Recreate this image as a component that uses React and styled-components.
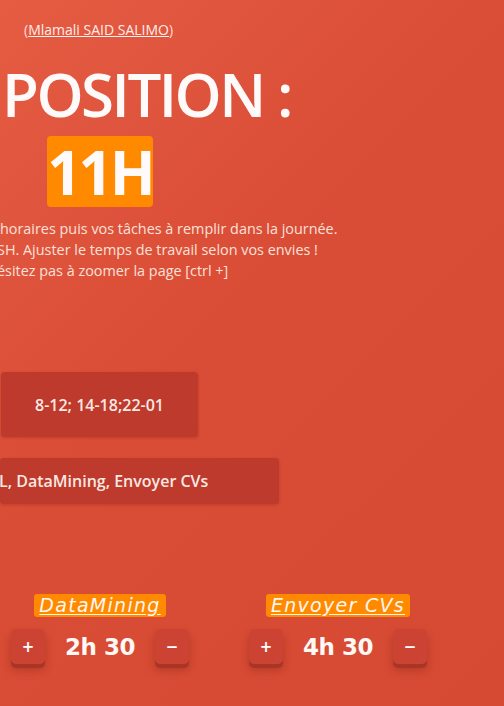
import React from "react";
import styled, { createGlobalStyle } from "styled-components";

const GlobalStyle = createGlobalStyle`
  html, body {
    margin: 0;
    padding: 0;
  }
  body {
    min-height: 100vh;
    background: linear-gradient(135deg, #e55c43 0%, #d94c35 45%, #d64a33 100%);
    font-family: "Open Sans", "Noto Sans", sans-serif;
    overflow: hidden;
  }
`;

const tasks = [
  { name: "DataMining", time: "2h 30" },
  { name: "Envoyer CVs", time: "4h 30" },
];

function App() {
  return (
    <>
      <GlobalStyle />
      <Page>
        <Credit>
          (<a href="/#">Mlamali SAID SALIMO</a>)
        </Credit>
        <Title>POSITION :</Title>
        <HoursRow>
          <Hours>11H</Hours>
        </HoursRow>
        <Intro>
          <Line>horaires puis vos tâches à remplir dans la journée.</Line>
          <Line indent={-3}>SH. Ajuster le temps de travail selon vos envies !</Line>
          <Line indent={-3}>ésitez pas à zoomer la page [ctrl +]</Line>
        </Intro>
        <Schedule>8-12; 14-18;22-01</Schedule>
        <TaskInput>
          <span>L, DataMining, Envoyer CVs</span>
        </TaskInput>
        <TaskRow>
          {tasks.map((task) => (
            <TaskCard key={task.name}>
              <TaskName href="/#">{task.name}</TaskName>
              <Counter>
                <StepButton>+</StepButton>
                <Time>{task.time}</Time>
                <StepButton>−</StepButton>
              </Counter>
            </TaskCard>
          ))}
        </TaskRow>
      </Page>
    </>
  );
}

export default App;

const Page = styled.div`
  display: flex;
  flex-direction: column;
  align-items: flex-start;
  padding-top: 20px;
  color: #fff;
`;

const Credit = styled.div`
  margin-left: 24px;
  font-size: 14px;
  line-height: 20px;
  color: #f9ddd5;

  a {
    color: #fdeee9;
    text-decoration: underline;
  }
`;

const Title = styled.h1`
  margin: 24px 0 0 2px;
  font-size: 60px;
  line-height: 60px;
  font-weight: 600;
  letter-spacing: -2.5px;
  color: #fffafa;
`;

const HoursRow = styled.div`
  margin: 12px 0 0 47px;
`;

const Hours = styled.div`
  width: 106px;
  height: 71px;
  display: flex;
  align-items: center;
  justify-content: center;
  background: #ff8a00;
  border-radius: 4px;
  font-size: 60px;
  font-weight: 700;
  letter-spacing: -3px;
  color: #fffafa;
`;

const Intro = styled.div`
  margin-top: 11px;
  font-size: 14.4px;
  line-height: 21px;
  color: #fbe1da;
`;

const Line = styled.div`
  text-indent: ${(props) => props.indent || 0}px;
  white-space: nowrap;
`;

const Field = styled.div`
  display: flex;
  align-items: center;
  background: #bd3a2c;
  border-radius: 4px;
  box-shadow: 0 1px 3px rgba(120, 20, 10, 0.25);
  font-size: 16px;
  font-weight: 600;
  color: #fbe8e3;
`;

const Schedule = styled(Field)`
  margin: 91px 0 0 1px;
  width: 197px;
  height: 65px;
  justify-content: center;
`;

const TaskInput = styled(Field)`
  margin-top: 21px;
  width: 279px;
  height: 46px;
  justify-content: flex-start;

  span {
    margin-left: -1px;
  }
`;

const TaskRow = styled.div`
  display: flex;
  gap: 60px;
  margin: 90px 0 0 11px;
`;

const TaskCard = styled.div`
  display: flex;
  flex-direction: column;
  align-items: center;
  gap: 12px;
  width: 178px;
`;

const TaskName = styled.a`
  padding: 0 5px;
  height: 23px;
  line-height: 23px;
  background: #ff8a00;
  border-radius: 3px;
  font-family: "DejaVu Sans", "Liberation Sans", sans-serif;
  font-style: italic;
  font-size: 19px;
  letter-spacing: 1.3px;
  color: #fff6f0;
  text-decoration: underline;
  text-underline-offset: 2px;
`;

const Counter = styled.div`
  display: flex;
  align-items: center;
  justify-content: space-between;
  width: 100%;
`;

const StepButton = styled.button`
  width: 34px;
  height: 35px;
  border: none;
  border-radius: 5px;
  background: #cd4333;
  box-shadow: 0 4px 0 #a93526, 0 6px 8px rgba(110, 25, 15, 0.35);
  font-family: "DejaVu Sans", sans-serif;
  font-size: 15px;
  font-weight: 700;
  color: #fff;
  padding: 0;
`;

const Time = styled.span`
  font-family: "DejaVu Sans", "Liberation Sans", sans-serif;
  font-size: 23px;
  font-weight: 700;
  letter-spacing: -0.5px;
  color: #fff8f5;
`;
